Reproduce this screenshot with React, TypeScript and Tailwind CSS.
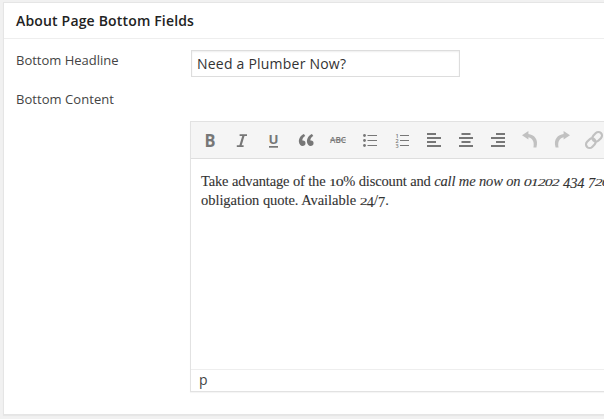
import React from "react";

const SERIF = "font-['Liberation_Serif',serif]";

function Tool({ children, faded = false }: { children: React.ReactNode; faded?: boolean }) {
  return (
    <button
      type="button"
      className={`flex w-8 h-[35px] shrink-0 items-center justify-center ${faded ? "text-[#c1c1c1]" : "text-[#777777]"}`}
    >
      <svg width="20" height="20" viewBox="0 0 20 20" fill="currentColor" className="overflow-visible">
        {children}
      </svg>
    </button>
  );
}

function AlignBars({ short }: { short: number }) {
  return (
    <>
      <rect x={short} y="3" width="9" height="2" />
      <rect x="3" y="7" width="14" height="2" />
      <rect x={short} y="11" width="9" height="2" />
      <rect x="3" y="15" width="14" height="2" />
    </>
  );
}

function Toolbar() {
  return (
    <div className="flex h-[37px] items-center border-b border-[#dedede] bg-[#f5f5f5] pl-[3px] font-['Open_Sans',sans-serif]">
      <Tool>
        <text x="4.5" y="17" fontSize="17.5" fontWeight="700" textLength="11" lengthAdjust="spacingAndGlyphs">B</text>
      </Tool>
      <Tool>
        <path d="M7.6 5.2H15M4.8 16.2h6.8" fill="none" stroke="currentColor" strokeWidth="1.7" />
        <path d="m11.7 5-3.4 11" fill="none" stroke="currentColor" strokeWidth="2.2" />
      </Tool>
      <Tool>
        <text x="4.500" y="14.200" fontSize="13" fontWeight="700" textLength="10" lengthAdjust="spacingAndGlyphs">U</text>
        <rect x="5" y="16" width="9" height="1.7" />
      </Tool>
      <Tool>
        <path d="M9.49 13.22c0-.74-.2-1.38-.61-1.9-.62-.78-1.83-.88-2.53-.72-.29-1.65 1.11-3.75 2.92-4.65L7.88 4c-2.73 1.3-5.42 4.28-4.96 8.05C3.21 14.43 4.59 16 6.54 16c.85 0 1.56-.25 2.12-.75s.83-1.18.83-2.03zm8.05 0c0-.74-.2-1.38-.61-1.9-.63-.78-1.83-.88-2.53-.72-.29-1.65 1.11-3.75 2.92-4.65L15.93 4c-2.73 1.3-5.41 4.28-4.95 8.05.29 2.38 1.66 3.95 3.61 3.95.85 0 1.56-.25 2.12-.75s.83-1.18.83-2.03z" />
      </Tool>
      <Tool>
        <text x="2" y="12.8" fontSize="8" fontWeight="600" textLength="16" lengthAdjust="spacingAndGlyphs">ABC</text>
        <rect x="2" y="9.6" width="16" height="0.8" />
      </Tool>
      <Tool>
        {[5.5, 10.5, 15.5].map((y) => (
          <g key={y}>
            <circle cx="4.5" cy={y} r="1.4" />
            <rect x="7.5" y={y - 0.5} width="9.5" height="1" />
          </g>
        ))}
      </Tool>
      <Tool>
        {[5.5, 10.5, 15.5].map((y, i) => (
          <g key={y}>
            <text x="3.6" y={y + 2} fontSize="5.5" fontWeight="600">{i + 1}</text>
            <rect x="8" y={y - 0.5} width="9" height="1" />
          </g>
        ))}
      </Tool>
      <Tool><AlignBars short={3} /></Tool>
      <Tool><AlignBars short={5.5} /></Tool>
      <Tool><AlignBars short={8} /></Tool>
      <Tool faded>
        <path d="M2 5.2 8.4 1v3.1C14 4.6 19 9.5 16.4 17.6h-3C14.6 12 12.7 8 8.4 7.2v2.3z" />
      </Tool>
      <Tool faded>
        <path d="M18 5.2 11.6 1v3.1C6 4.6 1 9.5 3.6 17.6h3C5.4 12 7.3 8 11.6 7.2v2.3z" />
      </Tool>
      <Tool faded>
        <g transform="rotate(-45 10 10)" fill="none" stroke="currentColor" strokeWidth="2.2">
          <rect x="0.2" y="6.4" width="10.6" height="7.2" rx="3.6" />
          <rect x="9.2" y="6.4" width="10.6" height="7.2" rx="3.6" />
        </g>
      </Tool>
    </div>
  );
}

/* Sets digits as text figures: 0-2 at x-height, 3/4/7 hanging below the baseline. */
function Figures({ value }: { value: string }) {
  return (
    <>
      {value.split("").map((c, i) => {
        if ("012".includes(c))
          return <span key={i} className="inline-block origin-[50%_78%] scale-x-[1.1] scale-y-[0.74]">{c}</span>;
        if ("34579".includes(c))
          return <span key={i} className="relative top-[2px]">{c}</span>;
        return <span key={i}>{c}</span>;
      })}
    </>
  );
}

export default function App() {
  return (
    <div className="h-[419px] w-[604px] overflow-hidden bg-[#f1f1f1] pl-[3px] pt-[2px] font-['Open_Sans',sans-serif] text-[#444444]">
      <section className="h-[413px] border-y border-l border-[#e5e5e5] bg-white shadow-[0_1px_1px_rgba(0,0,0,0.04)]">
        <h3 className="h-[36px] border-b border-[#eeeeee] pl-3 text-[14px] font-semibold leading-[35px] tracking-[0.17px] text-[#222222]">
          About Page Bottom Fields
        </h3>
        <div className="flex h-[49px] pl-3 pt-[11px]">
          <label htmlFor="headline" className="w-[175px] shrink-0 text-[13px] leading-[21px]">Bottom Headline</label>
          <input
            id="headline"
            defaultValue="Need a Plumber Now?"
            className="h-[27px] w-[269px] border border-[#dddddd] bg-white px-[5px] text-[14px] tracking-[0.22px] text-[#333333] shadow-[inset_0_1px_2px_rgba(0,0,0,0.07)]"
          />
        </div>
        <div className="pl-3 text-[13px] leading-[23px] tracking-[0.05px]">Bottom Content</div>
        <div className="ml-[186px] mt-[10px] flex h-[271px] w-[500px] flex-col border border-[#e2e2e2] shadow-[0_1px_1px_rgba(0,0,0,0.04)]">
          <Toolbar />
          <div className={`h-[210px] whitespace-nowrap pl-[10px] pt-[13px] text-[14.5px] leading-[19px] text-[#333333] [-webkit-text-stroke:0.1px_#333333] ${SERIF}`}>
            <p>
              <span className="tracking-[-0.14px]">Take advantage of the <Figures value="10" />% discount and </span>
              <em className="tracking-[-0.14px]">call me now on <Figures value="01202 434 720" /> for a free no</em>
            </p>
            <p className="tracking-[-0.05px]">obligation quote. Available <Figures value="24/7" />.</p>
          </div>
          <div className="h-[22px] border-t border-[#eeeeee] pl-2 text-[14px] leading-[20px]">p</div>
        </div>
      </section>
    </div>
  );
}
